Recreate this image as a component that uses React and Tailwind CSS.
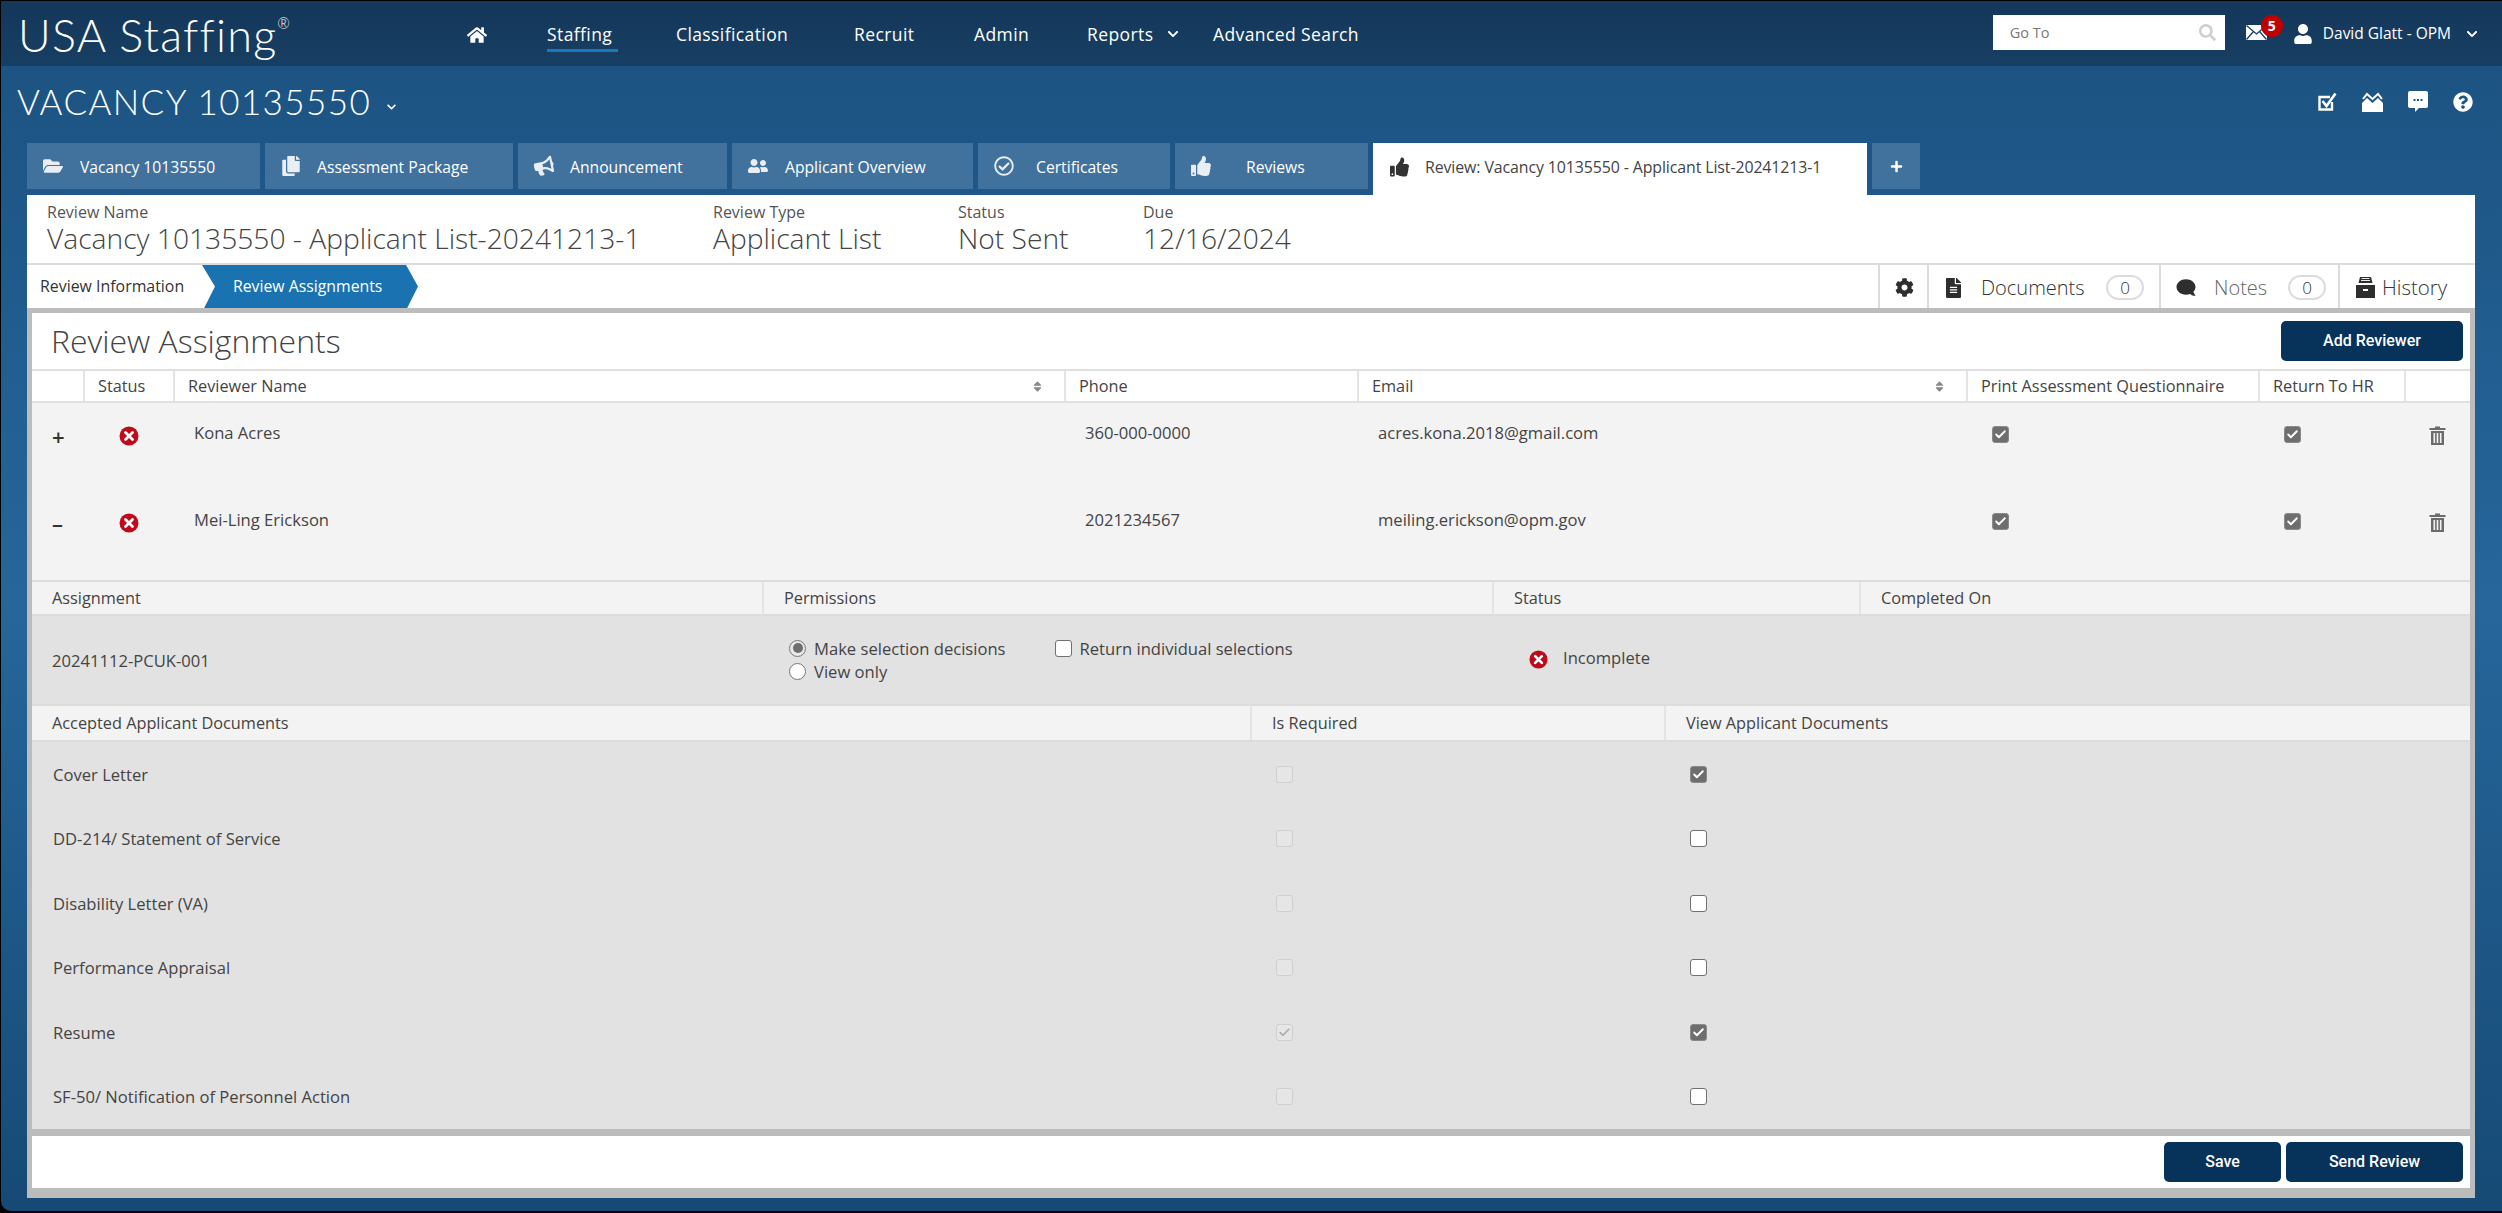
import React from "react";
import { FaHome, FaFolderOpen, FaCopy, FaBullhorn, FaUserFriends, FaRegCheckCircle, FaThumbsUp, FaPlus, FaSearch, FaUser, FaCog, FaFileAlt, FaComment, FaQuestionCircle, FaChevronDown, FaSort } from "react-icons/fa";
import { Check } from "lucide-react";

const BODY = "font-['Open_Sans',sans-serif]";

const TABS = [
  { label: "Vacancy 10135550", icon: FaFolderOpen, w: "w-[233px]", gap: "gap-[17px]" },
  { label: "Assessment Package", icon: FaCopy, w: "w-[248px]", gap: "gap-[16px]" },
  { label: "Announcement", icon: FaBullhorn, w: "w-[209px]", gap: "gap-[16px]", tilt: "-rotate-12" },
  { label: "Applicant Overview", icon: FaUserFriends, w: "w-[241px]", gap: "gap-[17px]" },
  { label: "Certificates", icon: FaRegCheckCircle, w: "w-[192px]", gap: "gap-[22px]" },
  { label: "Reviews", icon: FaThumbsUp, w: "w-[193px]", gap: "gap-[35px]" },
];

const DOCS = [
  { name: "Cover Letter", view: true },
  { name: "DD-214/ Statement of Service" },
  { name: "Disability Letter (VA)" },
  { name: "Performance Appraisal" },
  { name: "Resume", required: true, view: true },
  { name: "SF-50/ Notification of Personnel Action" },
];

function RedX({ className = "w-[20px] h-[20px]" }) {
  return (
    <svg viewBox="0 0 20 20" className={className}>
      <circle cx="10" cy="10" r="9.5" fill="#c00a1c" />
      <path d="M6.5 6.5 13.5 13.5M13.5 6.5 6.5 13.5" stroke="#fff" strokeWidth="2.8" strokeLinecap="round" />
    </svg>
  );
}

function CheckBox({ checked, disabled }) {
  if (disabled) {
    return (
      <div className="w-[17px] h-[17px] rounded-[3px] border border-[#cfcfcf] bg-[#e6e6e6] flex items-center justify-center">
        {checked && <Check className="w-[13px] h-[13px] text-[#a8a8a8]" strokeWidth={3} />}
      </div>
    );
  }
  if (checked) {
    return (
      <div className="w-[17px] h-[17px] rounded-[3px] bg-[#6e6e6e] border border-[#8a8a8a] flex items-center justify-center">
        <Check className="w-[13px] h-[13px] text-white" strokeWidth={3.5} />
      </div>
    );
  }
  return <div className="w-[17px] h-[17px] rounded-[3px] bg-white border border-[#707070]" />;
}

function Radio({ checked }) {
  return (
    <div className={`w-[17px] h-[17px] rounded-full border border-[#767676] flex items-center justify-center ${checked ? "bg-[#e8e8e8]" : "bg-white"}`}>
      {checked && <div className="w-[10px] h-[10px] rounded-full bg-[#6e6e6e]" />}
    </div>
  );
}

function Trash() {
  return (
    <svg viewBox="0 0 17 19" className="w-[17px] h-[19px]">
      <path d="M6 0.5h5v1.5h5.5v2H0.5V2H6z" fill="#6b6b6b" />
      <path d="M2 5h13v14H2z" fill="#6b6b6b" />
      <path d="M4.5 7h1.6v10H4.5zM7.7 7h1.6v10H7.7zM10.9 7h1.6v10h-1.6z" fill="#f3f3f3" />
    </svg>
  );
}

function MailLines() {
  return (
    <svg viewBox="0 0 21 17" className="w-[21px] h-[17px]">
      <rect x="0" y="1" width="21" height="15" fill="#fff" />
      <path d="M0.5 1.5 10.5 10 20.5 1.5M0.5 15.5 7.5 7.5M20.5 15.5 13.5 7.5" fill="none" stroke="#173f63" strokeWidth="1.3" />
    </svg>
  );
}

function MailCrown() {
  return (
    <svg viewBox="0 0 21 20" className="w-[21px] h-[20px]">
      <path d="M1 7 5 2l5.5 5L16 2l4 5" fill="none" stroke="#fff" strokeWidth="2" />
      <path d="M0 11 5 6l5.5 5L16 6l5 5v9H0z" fill="#fff" />
    </svg>
  );
}

function CheckOutline() {
  return (
    <svg viewBox="0 0 20 20" className="w-[20px] h-[20px]">
      <path d="M15 10v7.5H2.5V5H13" fill="none" stroke="#fff" strokeWidth="2.4" />
      <path d="M5.5 9 9.5 14 18.5 1.5" fill="none" stroke="#fff" strokeWidth="2.6" />
    </svg>
  );
}

function ChatDots() {
  return (
    <svg viewBox="0 0 20 21" className="w-[20px] h-[21px]">
      <path d="M2 0h16a2 2 0 0 1 2 2v13a2 2 0 0 1-2 2h-7l-4 4v-4H2a2 2 0 0 1-2-2V2a2 2 0 0 1 2-2z" fill="#fff" />
      <path d="M5.5 8h2v2h-2zM9 8h2v2H9zM12.500 8h2v2h-2z" fill="#1d5583" />
    </svg>
  );
}

function FileBox() {
  return (
    <svg viewBox="0 0 19 21" className="w-[19px] h-[21px]">
      <path d="M4 0h11l1.500 6h-14z" fill="#2e2e2e" />
      <path d="M5.500 1.500h8M5 3.500h9" stroke="#fff" strokeWidth="0.9" />
      <path d="M0 8h19v13H0z" fill="#2e2e2e" />
      <path d="M7 12h5v2H7z" fill="#fff" />
    </svg>
  );
}

function Top() {
  return (
    <div className="h-[65px] shrink-0 flex items-center bg-gradient-to-b from-[#14375a] to-[#173f63] text-white relative">
      <div className="ml-[17px] w-[445px] flex items-start font-['Lato',sans-serif] font-light text-[45px] leading-none tracking-[1.2px] mt-[3px]">
        USA Staffing<span className="text-[15px] mt-[3px]">®</span>
      </div>
      <FaHome className="w-[20px] h-[18px] ml-[4px] mr-[60px] mt-[2px]" />
      <nav className={`${BODY} flex items-center text-[17.500px] font-medium tracking-[0.4px] mt-[1px]`}>
        <span className="relative w-[71px] whitespace-nowrap">
          Staffing
          <span className="absolute left-0 right-0 -bottom-[5px] h-[3px] bg-[#1a78bd]" />
        </span>
        <span className="ml-[58px] w-[119px] whitespace-nowrap">Classification</span>
        <span className="ml-[59px] w-[62px] whitespace-nowrap">Recruit</span>
        <span className="ml-[58px] w-[56px] whitespace-nowrap">Admin</span>
        <span className="ml-[57px] w-[70px] whitespace-nowrap">Reports</span>
        <FaChevronDown className="ml-[9px] w-[14px] h-[12px]" />
        <span className="ml-[33px] whitespace-nowrap">Advanced Search</span>
      </nav>
      <div className="ml-auto mr-[23px] flex items-center">
        <div className={`${BODY} w-[232px] h-[35px] bg-white flex items-center justify-between pl-[17px] pr-[9px] text-[14.500px] text-[#777] -mt-[2px]`}>
          Go To
          <FaSearch className="w-[17px] h-[17px] text-[#d0d0d0]" />
        </div>
        <div className="relative ml-[21px] mr-[26px] -mt-[3px]">
          <MailLines />
          <span className={`${BODY} absolute -top-[9px] left-[15px] w-[22px] h-[22px] rounded-full bg-[#c00000] flex items-center justify-center text-[14px] font-bold`}>5</span>
        </div>
        <FaUser className="w-[20px] h-[20px]" />
        <span className={`${BODY} ml-[10px] text-[15.500px] font-medium whitespace-nowrap`}>David Glatt - OPM</span>
        <FaChevronDown className="ml-[14px] w-[14px] h-[12px]" />
      </div>
    </div>
  );
}

function SubHeader() {
  return (
    <div className="h-[77px] shrink-0 flex items-center text-white">
      <h1 className="ml-[16px] font-['Lato',sans-serif] font-light text-[35px] leading-none tracking-[1.400px] -mt-[6px]">VACANCY 10135550</h1>
      <FaChevronDown className="ml-[14px] mt-[4px] w-[13px] h-[10px]" />
      <div className="ml-auto mr-[29px] flex items-center gap-[25px] -mt-[6px]">
        <CheckOutline />
        <MailCrown />
        <ChatDots />
        <FaQuestionCircle className="w-[20px] h-[20px]" />
      </div>
    </div>
  );
}

function Tabs() {
  return (
    <div className={`${BODY} h-[52px] shrink-0 ml-[26px] flex items-start gap-[5px] text-[15.700px]`}>
      {TABS.map((t) => (
        <div key={t.label} className={`${t.w} h-[46px] bg-[#41729e] text-white flex items-center pl-[16px] ${t.gap} whitespace-nowrap`}>
          <t.icon className={`w-[20px] h-[20px] shrink-0 text-[#e8eef4] ${t.tilt || ""}`} />
          <span className="pt-[3px]">{t.label}</span>
        </div>
      ))}
      <div className="w-[494px] h-[52px] bg-white text-[#444] flex items-center pl-[17px] gap-[16px] pb-[5px] whitespace-nowrap">
        <FaThumbsUp className="w-[19px] h-[20px] shrink-0 text-[#333]" />
        <span className="pt-[3px] text-[15.900px] tracking-[-0.1px]">Review: Vacancy 10135550 - Applicant List-20241213-1</span>
      </div>
      <div className="w-[48px] h-[46px] bg-[#41729e] text-white flex items-center justify-center">
        <FaPlus className="w-[13px] h-[13px]" />
      </div>
    </div>
  );
}

function Info({ label, value, w }) {
  return (
    <div className={w}>
      <div className="text-[16px] leading-[18px] text-[#555]">{label}</div>
      <div className="text-[28.200px] leading-[34px] font-light text-[#444] whitespace-nowrap">{value}</div>
    </div>
  );
}

function InfoBar() {
  return (
    <div className="h-[70px] shrink-0 flex pl-[20px] pt-[8px] border-b-2 border-[#dcdcdc]">
      <Info label="Review Name" value="Vacancy 10135550 - Applicant List-20241213-1" w="w-[666px]" />
      <Info label="Review Type" value="Applicant List" w="w-[245px]" />
      <Info label="Status" value="Not Sent" w="w-[185px]" />
      <Info label="Due" value="12/16/2024" w="w-[200px]" />
    </div>
  );
}

function SideTab({ w, children }) {
  return <div className={`${w} h-full border-l-2 border-[#dcdcdc] flex items-center pt-[2px]`}>{children}</div>;
}

function Count() {
  return <span className="w-[38px] h-[25px] rounded-full border-2 border-[#dcdcdc] text-[17px] text-[#333] flex items-center justify-center">0</span>;
}

function StepsBar() {
  return (
    <div className="h-[43px] shrink-0 flex items-center">
      <span className="ml-[13px] w-[162px] pt-[1px] text-[15.900px] text-[#333] whitespace-nowrap">Review Information</span>
      <div className="w-[216px] h-full bg-[#1a72b0] text-white text-[15.800px] font-medium flex items-center pl-[31px] pt-[1px] whitespace-nowrap [clip-path:polygon(0_0,94.5%_0,100%_50%,95%_100%,1%_100%,6%_50%)]">
        Review Assignments
      </div>
      <div className="ml-auto h-full flex text-[20px] font-light">
        <SideTab w="w-[49px]"><FaCog className="ml-[15px] w-[19px] h-[19px] text-[#2e2e2e]" /></SideTab>
        <SideTab w="w-[232px]">
          <FaFileAlt className="ml-[16px] w-[17px] h-[20px] text-[#2e2e2e]" />
          <span className="ml-[19px] w-[125px] text-[#333]">Documents</span>
          <Count />
        </SideTab>
        <SideTab w="w-[179px]">
          <FaComment className="ml-[15px] w-[20px] h-[19px] text-[#2e2e2e] -scale-x-100" />
          <span className="ml-[18px] w-[74px] text-[#666]">Notes</span>
          <Count />
        </SideTab>
        <SideTab w="w-[137px]">
          <div className="ml-[16px]"><FileBox /></div>
          <span className="ml-[7px] text-[#333] text-[20.500px]">History</span>
        </SideTab>
      </div>
    </div>
  );
}

function Th({ children, sort, first }) {
  return (
    <div className={`flex items-center justify-between pl-[13px] pr-[22px] whitespace-nowrap ${first ? "" : "border-l-2 border-[#e4e4e4]"}`}>
      <span>{children}</span>
      {sort && <FaSort className="w-[9px] h-[13px] text-[#888]" />}
    </div>
  );
}

function ReviewerRow({ sign, name, phone, email, h }) {
  return (
    <div className={`${h} grid grid-cols-[51px_90px_891px_293px_609px_292px_146px_64px] pt-[23px] text-[#444] text-[16.600px]`}>
      <div className="text-[22px] leading-[20px] font-semibold text-[#333] pl-[20px]">{sign}</div>
      <div className="flex justify-center pl-[2px]"><RedX /></div>
      <div className="pl-[21px] leading-[20px] -mt-[3px]">{name}</div>
      <div className="pl-[21px] leading-[20px] -mt-[3px]">{phone}</div>
      <div className="pl-[21px] leading-[20px] -mt-[3px]">{email}</div>
      <div className="pl-[26px]"><CheckBox checked /></div>
      <div className="pl-[26px]"><CheckBox checked /></div>
      <div className="pl-[25px]"><Trash /></div>
    </div>
  );
}

function Panel() {
  return (
    <div className="flex-1 mx-[5px] flex flex-col bg-white text-[16.600px] text-[#444]">
      <div className="h-[56px] shrink-0 flex items-center justify-between pl-[19px] pr-[7px]">
        <h2 className="text-[32px] font-light text-[#444] leading-none">Review Assignments</h2>
        <button className="w-[182px] h-[40px] rounded-[5px] bg-[#07325a] text-white font-['Roboto',sans-serif] font-medium text-[16px]">Add Reviewer</button>
      </div>
      <div className="h-[34px] shrink-0 grid grid-cols-[51px_90px_891px_293px_609px_292px_146px_64px] border-y-2 border-[#e0e0e0] text-[#444] text-[16.300px]">
        <Th first />
        <Th>Status</Th>
        <Th sort>Reviewer Name</Th>
        <Th>Phone</Th>
        <Th sort>Email</Th>
        <Th>Print Assessment Questionnaire</Th>
        <Th>Return To HR</Th>
        <Th />
      </div>
      <div className="bg-[#f3f3f3] shrink-0 h-[177px]">
        <ReviewerRow sign="+" name="Kona Acres" phone="360-000-0000" email="acres.kona.2018@gmail.com" h="h-[87px]" />
        <ReviewerRow sign="–" name="Mei-Ling Erickson" phone="2021234567" email="meiling.erickson@opm.gov" h="h-[87px]" />
      </div>
      <div className="h-[36px] shrink-0 grid grid-cols-[730px_730px_367px_609px] bg-[#f3f3f3] border-y-2 border-[#dcdcdc] text-[16.300px]">
        <Th first><span className="pl-[7px]">Assignment</span></Th>
        <Th><span className="pl-[7px]">Permissions</span></Th>
        <Th><span className="pl-[7px]">Status</span></Th>
        <Th><span className="pl-[7px]">Completed On</span></Th>
      </div>
      <div className="h-[88px] shrink-0 grid grid-cols-[730px_730px_367px_609px] bg-[#e2e2e2] items-center">
        <div className="pl-[20px] pt-[2px]">20241112-PCUK-001</div>
        <div className="pl-[27px] flex gap-[49px]">
          <div className="flex flex-col gap-[6px] leading-[17px] -mt-[1px]">
            <label className="flex items-center gap-[8px]"><Radio checked />Make selection decisions</label>
            <label className="flex items-center gap-[8px]"><Radio />View only</label>
          </div>
          <label className="flex items-start gap-[8px] leading-[17px] -mt-[1px]"><CheckBox />Return individual selections</label>
        </div>
        <div className="pl-[37px] flex items-center gap-[15px]">
          <RedX className="w-[19px] h-[19px]" />
          <span className="-mt-[3px]">Incomplete</span>
        </div>
        <div />
      </div>
      <div className="h-[38px] shrink-0 grid grid-cols-[1218px_414px_804px] bg-[#f3f3f3] border-y-2 border-[#dcdcdc] text-[16.300px]">
        <Th first><span className="pl-[7px]">Accepted Applicant Documents</span></Th>
        <Th><span className="pl-[7px]">Is Required</span></Th>
        <Th><span className="pl-[7px]">View Applicant Documents</span></Th>
      </div>
      <div className="h-[387px] shrink-0 bg-[#e2e2e2] grid grid-rows-6">
        {DOCS.map((d) => (
          <div key={d.name} className="grid grid-cols-[1218px_414px_804px] items-center">
            <div className="pl-[21px] pt-[2px]">{d.name}</div>
            <div className="pl-[26px]"><CheckBox disabled checked={d.required} /></div>
            <div className="pl-[26px]"><CheckBox checked={d.view} /></div>
          </div>
        ))}
      </div>
    </div>
  );
}

export default function App() {
  return (
    <div className="w-[2502px] h-[1213px] bg-black pt-px pl-px pb-[2px] overflow-hidden">
      <div className="h-full rounded-bl-[10px] overflow-hidden flex flex-col bg-gradient-to-b from-[#1b5180] via-[#26669b] to-[#164a75]">
        <Top />
        <SubHeader />
        <Tabs />
        <div className={`${BODY} ml-[26px] w-[2448px] h-[1003px] flex flex-col bg-[#bcbcbc]`}>
          <div className="bg-white flex flex-col shrink-0">
            <InfoBar />
            <StepsBar />
          </div>
          <div className="mt-[5px] h-[816px] flex flex-col">
            <Panel />
          </div>
          <div className="mx-[5px] mt-[7px] h-[52px] shrink-0 bg-white flex items-center justify-end gap-[5px] pr-[7px]">
            <button className="w-[117px] h-[40px] rounded-[5px] bg-[#07325a] text-white font-['Roboto',sans-serif] font-medium text-[16px]">Save</button>
            <button className="w-[177px] h-[40px] rounded-[5px] bg-[#07325a] text-white font-['Roboto',sans-serif] font-medium text-[16px]">Send Review</button>
          </div>
        </div>
      </div>
    </div>
  );
}
